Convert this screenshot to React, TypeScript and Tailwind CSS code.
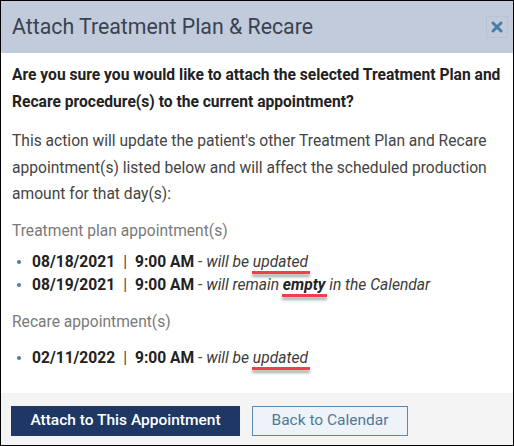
import React from 'react';

type Row = {
  date: string;
  time: string;
  pre: string;
  mark: string;
  markBold?: boolean;
  post?: string;
};

const TREATMENT_ROWS: Row[] = [
  { date: '08/18/2021', time: '9:00 AM', pre: 'will be ', mark: 'updated' },
  { date: '08/19/2021', time: '9:00 AM', pre: 'will remain ', mark: 'empty', markBold: true, post: ' in the Calendar' },
];

const RECARE_ROWS: Row[] = [{ date: '02/11/2022', time: '9:00 AM', pre: 'will be ', mark: 'updated' }];

function Marked({ text, bold }: { text: string; bold?: boolean }) {
  return (
    <span className={`relative inline-block ${bold ? 'font-bold text-[#222]' : ''}`}>
      {text}
      {/* red annotation underline */}
      <span className="absolute left-[-1px] right-[-2px] top-[20px] h-[3px] bg-[#f0404a] shadow-[0_3px_3px_rgba(0,0,0,0.35)]" />
    </span>
  );
}

function ApptList({ rows }: { rows: Row[] }) {
  return (
    <ul className="pl-[5px]">
      {rows.map((r) => (
        <li key={r.date} className="flex items-center leading-[23px]">
          <span className="w-[4px] h-[4px] rounded-full bg-[#4d7c9c] mr-[11px]" />
          <span className="font-bold text-[#222]">{r.date}</span>
          <span className="text-[#444] mx-[8px]">|</span>
          <span className="font-bold text-[#222]">{r.time}</span>
          <span className="text-[#444] whitespace-pre"> - </span>
          <span className="italic text-[#3a3a3a] whitespace-pre">
            {r.pre}
            <Marked text={r.mark} bold={r.markBold} />
            {r.post}
          </span>
        </li>
      ))}
    </ul>
  );
}

export default function App() {
  return (
    <div
      className="w-[514px] h-[446px] border border-black bg-white flex flex-col overflow-hidden"
      style={{ fontFamily: 'Roboto, "Liberation Sans", sans-serif' }}
    >
      {/* Header */}
      <div className="h-[52px] shrink-0 bg-[#c1cbdc] flex items-center justify-between pl-[11px] pr-[5px]">
        <h2 className="text-[21.3px] text-[#3a4250] font-normal">Attach Treatment Plan &amp; Recare</h2>
        <button className="w-[22px] h-[22px] border border-[#b7c2d2] flex items-center justify-center">
          <svg width="12" height="12" viewBox="0 0 12 12">
            <path d="M2 2 L10 10 M10 2 L2 10" stroke="#4a7ea3" strokeWidth="3" strokeLinecap="round" />
          </svg>
        </button>
      </div>

      {/* Body */}
      <div className="flex-1 px-[11px] pt-[9px] text-[15.6px]">
        <p className="font-bold text-[#222] leading-[27px]">
          Are you sure you would like to attach the selected Treatment Plan and Recare procedure(s) to the current
          appointment?
        </p>
        <p className="mt-3 text-[#444] leading-[26.5px]">
          This action will update the patient's other Treatment Plan and Recare appointment(s) listed below and will
          affect the scheduled production amount for that day(s):
        </p>
        <p className="mt-[10px] text-[#7a7a7a] leading-[26px]">Treatment plan appointment(s)</p>
        <div className="mt-[7px]">
          <ApptList rows={TREATMENT_ROWS} />
        </div>
        <p className="mt-3 text-[#7a7a7a] leading-[26px]">Recare appointment(s)</p>
        <div className="mt-[12px]">
          <ApptList rows={RECARE_ROWS} />
        </div>
      </div>

      {/* Footer */}
      <div className="h-[52px] shrink-0 bg-[#f4f4f4] flex items-start gap-[12px] pl-[10px] pt-[13px]">
        <button className="w-[229px] h-[30px] bg-[#1f3765] text-white text-[15.5px] font-medium">
          Attach to This Appointment
        </button>
        <button className="w-[156px] h-[30px] bg-[#eef3fa] border border-[#5b89a9] text-[#4f7a99] text-[15.5px]">
          Back to Calendar
        </button>
      </div>
    </div>
  );
}
